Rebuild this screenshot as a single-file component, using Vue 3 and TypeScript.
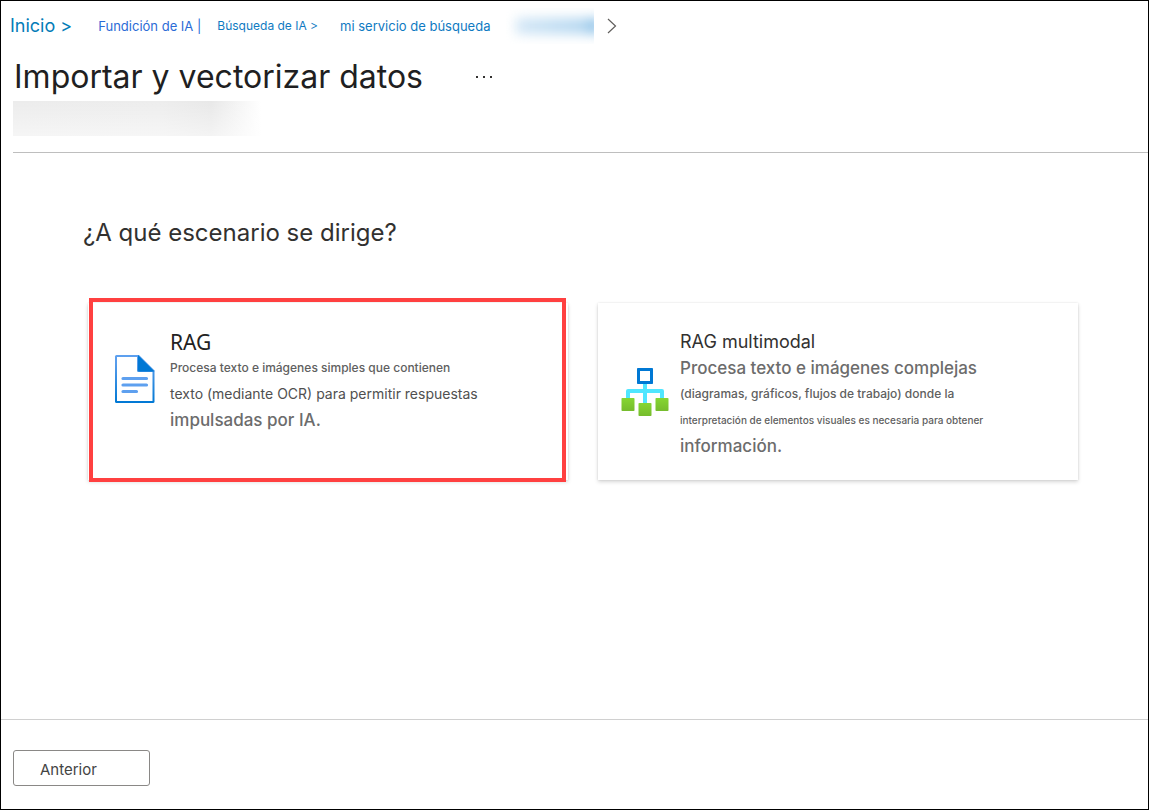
<script setup lang="ts">
interface Line {
  text: string
  size: string
}

interface Scenario {
  id: string
  title: string
  titleClass: string
  lines: Line[]
}

const crumbs = [
  { text: 'Inicio >', kind: 'home' },
  { text: 'Fundición de IA |', kind: 'foundry' },
  { text: 'Búsqueda de IA >', kind: 'search' },
  { text: 'mi servicio de búsqueda', kind: 'service' },
]

const scenarios: Scenario[] = [
  {
    id: 'rag',
    title: 'RAG',
    titleClass: 'strong',
    lines: [
      { text: 'Procesa texto e imágenes simples que contienen', size: 'small' },
      { text: 'texto (mediante OCR) para permitir respuestas', size: 'medium' },
      { text: 'impulsadas por IA.', size: 'large' },
    ],
  },
  {
    id: 'multimodal',
    title: 'RAG multimodal',
    titleClass: 'regular',
    lines: [
      { text: 'Procesa texto e imágenes complejas', size: 'large' },
      { text: '(diagramas, gráficos, flujos de trabajo) donde la', size: 'small' },
      { text: 'interpretación de elementos visuales es necesaria para obtener', size: 'tiny' },
      { text: 'información.', size: 'large' },
    ],
  },
]
</script>

<template>
  <div class="page">
    <header class="header">
      <nav class="crumbs" aria-label="Ruta">
        <a v-for="c in crumbs" :key="c.kind" href="#" :class="['crumb', c.kind]">{{ c.text }}</a>
        <span class="masked-name" aria-hidden="true"><i></i></span>
        <svg class="chevron" width="10" height="16" viewBox="0 0 10 16" aria-hidden="true">
          <path d="M1 1l7.5 7L1 15" fill="none" stroke="#605e5c" stroke-width="1.2" />
        </svg>
      </nav>
      <div class="title-row">
        <h1>Importar y vectorizar datos</h1>
        <button class="more" type="button" aria-label="Más">
          <svg width="18" height="4" viewBox="0 0 18 4" aria-hidden="true">
            <path d="M1 1h2v2H1zM8 1h2v2H8zM15 1h2v2h-2z" fill="#323130" />
          </svg>
        </button>
      </div>
      <div class="masked-subtitle" aria-hidden="true"></div>
    </header>

    <main class="content">
      <h2>¿A qué escenario se dirige?</h2>
      <div class="cards">
        <button
          v-for="s in scenarios"
          :key="s.id"
          type="button"
          :class="['card', { selected: s.id === 'rag' }]"
        >
          <svg v-if="s.id === 'rag'" class="icon" width="48" height="48" viewBox="0 0 48 48" aria-hidden="true">
            <defs>
              <linearGradient id="sheet" x1="0" y1="0" x2="0" y2="1">
                <stop offset="0" stop-color="#5ea0ef" />
                <stop offset="0.2" stop-color="#559bea" />
                <stop offset="1" stop-color="#0078d4" />
              </linearGradient>
            </defs>
            <path d="M5.500 0H28l15.500 15.500V46.500Q43.500 48 42 48H5.500Q4 48 4 46.500V1.500Q4 0 5.500 0z" fill="url(#sheet)" />
            <path d="M6 2H26v13.500Q26 17 27.500 17H41.500V46H6z" fill="#fff" />
            <path d="M27 0L43.500 16.500H28.500Q27 16.500 27 15z" fill="#0078d4" />
            <path d="M12 23.500H35.500M12 30H35.500M12 36.500H25.500" stroke="#5ea0ef" stroke-width="3.200" stroke-linecap="round" />
          </svg>
          <svg v-else class="icon" width="48" height="48" viewBox="0 0 48 48" aria-hidden="true">
            <defs>
              <linearGradient id="leaf" x1="0" y1="0" x2="0" y2="1">
                <stop offset="0" stop-color="#86d633" />
                <stop offset="1" stop-color="#76bc2d" />
              </linearGradient>
            </defs>
            <path d="M24 15V36M7 31V23H41V31" fill="none" stroke="#50e6ff" stroke-width="4" stroke-linejoin="round" />
            <rect x="16" y="0" width="16" height="16" rx="0.800" fill="#0078d4" />
            <rect x="19" y="3" width="10" height="10" fill="#fff" />
            <rect x="0.500" y="30" width="13" height="13" rx="0.800" fill="url(#leaf)" />
            <rect x="17.500" y="35" width="13" height="13" rx="0.800" fill="url(#leaf)" />
            <rect x="34.500" y="30" width="13" height="13" rx="0.800" fill="url(#leaf)" />
          </svg>
          <span class="text">
            <span :class="['card-title', s.titleClass]">{{ s.title }}</span>
            <span v-for="l in s.lines" :key="l.text" :class="['line', l.size]">{{ l.text }}</span>
          </span>
        </button>
      </div>
    </main>

    <footer class="footer">
      <button class="previous" type="button">Anterior</button>
    </footer>
  </div>
</template>

<style>
body {
  margin: 0;
  background: #fff;
}
</style>

<style scoped>
.page {
  box-sizing: border-box;
  min-height: 100vh;
  display: flex;
  flex-direction: column;
  border: 1px solid #000;
  font-family: Inter, "Liberation Sans", sans-serif;
  color: #323130;
  background: #fff;
}

.header {
  margin-left: 12px;
  border-bottom: 1px solid #bebebe;
}

.crumbs {
  display: flex;
  align-items: center;
  height: 49px;
  margin-left: -3px;
  white-space: nowrap;
}

.crumb {
  text-decoration: none;
  font-size: 13px;
  color: #0f7ac2;
}

.crumb.home {
  font-size: 18px;
  color: #047cb8;
  margin-right: 26px;
}

.crumb.foundry {
  color: #2b6bd6;
  margin-right: 16px;
}

.crumb.search {
  font-size: 12px;
  margin-right: 22px;
}

.crumb.service {
  margin-right: 16px;
}

.masked-name {
  width: 88px;
  height: 36px;
  display: flex;
  align-items: center;
  overflow: hidden;
}

.masked-name i {
  flex: 1;
  height: 16px;
  margin: 0 -6px 0 10px;
  background: linear-gradient(90deg, #d3e7f6, #b5d7f0 80%, #7db9e4);
  filter: blur(6px);
}

.chevron {
  margin-left: 13px;
}

.title-row {
  box-sizing: border-box;
  display: flex;
  align-items: center;
  height: 51px;
  padding-top: 3px;
  margin-left: 1px;
}

h1 {
  margin: 0;
  font-size: 32px;
  line-height: 40px;
  font-weight: 400;
  color: #1f1f22;
  white-space: nowrap;
}

.more {
  margin-left: 52px;
  padding: 0;
  border: 0;
  background: none;
  display: flex;
}

.masked-subtitle {
  width: 248px;
  height: 35px;
  margin-bottom: 16px;
  background:
    linear-gradient(180deg, rgba(255, 255, 255, 0), rgba(255, 255, 255, 0.5)),
    linear-gradient(90deg, #ececec, #ededed 60%, #e8e8e8 80%, #fff);
}

.content {
  flex: 1;
  padding: 61px 70px 60px 82px;
}

h2 {
  margin: 0;
  font-size: 24px;
  line-height: 38px;
  font-weight: 400;
}

.cards {
  display: grid;
  grid-template-columns: 1fr 1fr;
  gap: 30px;
  margin: 51px 0 0 5px;
}

.card {
  position: relative;
  display: flex;
  align-items: flex-start;
  gap: 11px;
  min-height: 177px;
  padding: 26px 23px 21px;
  border: 0;
  background: #fff;
  box-shadow: 0 2px 4px rgba(0, 0, 0, 0.16), 0 0 2px rgba(0, 0, 0, 0.1);
  font-family: inherit;
  text-align: left;
}

.card.selected::after {
  content: "";
  position: absolute;
  inset: -5px 2px -2px 1px;
  border: 4px solid #ff4040;
}

.icon {
  flex: none;
  margin-top: 26px;
}

.card:not(.selected) .icon {
  margin-top: 39px;
}

.text {
  display: flex;
  flex-direction: column;
  white-space: nowrap;
}

.card-title,
.line {
  line-height: 26px;
}

.card-title {
  font-size: 18px;
  color: #323130;
}

.card-title.strong {
  font-family: "Noto Sans", sans-serif;
  font-size: 21px;
  color: #222;
}

.line {
  font-weight: 500;
  color: #606060;
}

.tiny {
  font-size: 10px;
}

.small {
  font-size: 12px;
}

.medium {
  font-size: 14px;
  font-weight: 400;
  color: #505050;
}

.large {
  font-size: 17px;
  color: #6c6c6c;
}

.footer {
  padding: 30px 12px 23px;
  border-top: 1px solid #d0d0d0;
}

.previous {
  width: 137px;
  height: 36px;
  padding: 2px 26px 0;
  border: 1px solid #8a8886;
  border-radius: 3px;
  background: #fff;
  font-family: inherit;
  font-size: 15px;
  color: #444;
  text-align: left;
}
</style>
